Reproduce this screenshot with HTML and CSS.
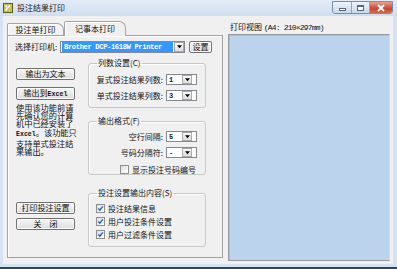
FILE: index.html
```html
<!DOCTYPE html>
<html lang="zh-CN">
<head>
    <meta charset="UTF-8">
    <title>投注结果打印</title>
    <link rel="stylesheet" href="styles.css">
</head>
<body>
    <div class="window">
        <div class="titlebar">
            <svg class="app-icon" viewBox="0 0 10 10">
                <rect x="0.5" y="0.5" width="9" height="9" fill="#c9c35c" stroke="#5d5a22"/>
                <path d="M2.5 7.5 L7 2.5 M2.5 2.5 L4 4" stroke="#fff" stroke-width="1.2"/>
            </svg>
            <span class="title">投注结果打印</span>
            <div class="caption-buttons">
                <span class="cap-btn min"><i></i></span>
                <span class="cap-btn max"><i></i></span>
                <span class="cap-btn close">
                    <svg viewBox="0 0 10 8"><path d="M2 1 L8 7 M8 1 L2 7" stroke="#fff" stroke-width="1.8"/></svg>
                </span>
            </div>
        </div>

        <div class="client">
            <div class="tab-area">
                <div class="tabs">
                    <div class="tab">投注单打印</div>
                    <div class="tab active">记事本打印</div>
                </div>
                <div class="tab-panel">
                    <div class="printer-row">
                        <label class="printer-label">选择打印机:</label>
                        <div class="combo wide">
                            <span class="combo-text selected">Brother DCP-1618W Printer</span>
                            <span class="drop"><svg viewBox="0 0 6 4"><path d="M0 0 H6 L3 3.5 Z"/></svg></span>
                        </div>
                        <button class="btn setup">设置</button>
                    </div>

                    <div class="panel-body">
                        <div class="left-col">
                            <button class="btn">输出为文本</button>
                            <button class="btn second">输出到<span class="mono">Excel</span></button>
                            <p class="hint">使用该功能前请先确认您的计算机中已经安装了<span class="mono">Excel</span>。该功能只支持单式投注结果输出。</p>
                            <button class="btn print">打印投注设置</button>
                            <button class="btn second">关&ensp;&ensp;闭</button>
                        </div>

                        <div class="right-col">
                            <fieldset class="group cols">
                                <legend>列数设置(C)</legend>
                                <div class="field">
                                    <span>复式投注结果列数:</span>
                                    <div class="combo small"><span class="combo-text">1</span><span class="drop"><svg viewBox="0 0 6 4"><path d="M0 0 H6 L3 3.5 Z"/></svg></span></div>
                                </div>
                                <div class="field">
                                    <span>单式投注结果列数:</span>
                                    <div class="combo small"><span class="combo-text">3</span><span class="drop"><svg viewBox="0 0 6 4"><path d="M0 0 H6 L3 3.5 Z"/></svg></span></div>
                                </div>
                            </fieldset>

                            <fieldset class="group format">
                                <legend>输出格式(F)</legend>
                                <div class="field">
                                    <span>空行间隔:</span>
                                    <div class="combo small"><span class="combo-text">5</span><span class="drop"><svg viewBox="0 0 6 4"><path d="M0 0 H6 L3 3.5 Z"/></svg></span></div>
                                </div>
                                <div class="field">
                                    <span>号码分隔符:</span>
                                    <div class="combo small"><span class="combo-text">-</span><span class="drop"><svg viewBox="0 0 6 4"><path d="M0 0 H6 L3 3.5 Z"/></svg></span></div>
                                </div>
                                <div class="check-row indent">
                                    <span class="check"></span>显示投注号码编号
                                </div>
                            </fieldset>

                            <fieldset class="group content">
                                <legend>投注设置输出内容(S)</legend>
                                <div class="check-row">
                                    <span class="check on"><svg viewBox="0 0 8 8"><path d="M1.5 4 L3.3 6 L6.8 1.5" fill="none" stroke="#1f5fb0" stroke-width="1.5"/></svg></span>投注结果信息
                                </div>
                                <div class="check-row">
                                    <span class="check on"><svg viewBox="0 0 8 8"><path d="M1.5 4 L3.3 6 L6.8 1.5" fill="none" stroke="#1f5fb0" stroke-width="1.5"/></svg></span>用户投注条件设置
                                </div>
                                <div class="check-row">
                                    <span class="check on"><svg viewBox="0 0 8 8"><path d="M1.5 4 L3.3 6 L6.8 1.5" fill="none" stroke="#1f5fb0" stroke-width="1.5"/></svg></span>用户过滤条件设置
                                </div>
                            </fieldset>
                        </div>
                    </div>
                </div>
            </div>

            <div class="preview">
                <div class="preview-label">打印视图 <span class="size-note">(A4: 210×297mm)</span></div>
                <div class="preview-page"></div>
            </div>
        </div>
    </div>
</body>
</html>
```

FILE: styles.css
```css
* {
    box-sizing: border-box;
}
body {
    margin: 0;
    font-family: "Noto Sans CJK SC", "Noto Sans", sans-serif;
    font-size: 8px;
    color: #111;
}
.mono {
    font-family: "Liberation Mono", monospace;
    font-size: 6.6px;
    font-weight: bold;
}
.window {
    width: 397px;
    height: 269px;
    background-color: #d5e3f3;
    border-bottom: 2px solid #1f4a57;
    overflow: hidden;
}
.titlebar {
    height: 16px;
    display: flex;
    align-items: center;
    padding-left: 3px;
    background: linear-gradient(#e3ecf7, #cfdeef);
}
.app-icon {
    width: 10px;
    height: 10px;
}
.title {
    margin-left: 4px;
    line-height: 10px;
    color: #222;
}
.caption-buttons {
    align-self: flex-start;
    display: flex;
    margin: 1px 4px 0 auto;
    height: 13px;
    border: 1px solid #7a8fab;
    border-radius: 0 0 3px 3px;
    overflow: hidden;
}
.cap-btn {
    display: flex;
    align-items: center;
    justify-content: center;
    background: linear-gradient(#eef3fa, #c9d8ec);
}
.cap-btn.min {
    width: 19px;
    border-right: 1px solid #93a6c1;
}
.cap-btn.min i {
    width: 7px;
    height: 3px;
    margin-top: 4px;
    background: #fff;
    border: 1px solid #55657d;
}
.cap-btn.max {
    width: 18px;
    border-right: 1px solid #93a6c1;
}
.cap-btn.max i {
    width: 7px;
    height: 6px;
    border: 1px solid #55657d;
    border-top-width: 2px;
    background: #fff;
}
.cap-btn.close {
    width: 22px;
    background: linear-gradient(#e4a193, #c6482f 60%, #d8674c);
}
.cap-btn.close svg {
    width: 10px;
    height: 8px;
}
.client {
    display: flex;
    margin: 0 4px 0 3px;
    height: 248px;
    background-color: #f0f0f0;
}
.tab-area {
    margin-left: 4px;
    width: 216px;
}
.tabs {
    display: flex;
    align-items: flex-end;
    height: 19px;
    padding-top: 5px;
}
.tab {
    width: 57px;
    height: 12px;
    line-height: 11px;
    text-align: center;
    border: 1px solid #a3a3a3;
    border-bottom: none;
    border-radius: 2px 7px 0 0;
    background-color: #f3f3f3;
    box-shadow: inset 1px 1px 0 #fff;
}
.tab.active {
    width: 62px;
    height: 15px;
    line-height: 13px;
    margin-bottom: -1px;
    position: relative;
    background-color: #f0f0f0;
}
.tab-panel {
    height: 223px;
    border: 1px solid #a3a3a3;
    box-shadow: inset 1px 1px 0 #fff;
    padding: 5px 0 0 7px;
}
.printer-row {
    display: flex;
    align-items: center;
    height: 12px;
}
.printer-label {
    width: 45px;
    line-height: 12px;
}
.combo {
    display: flex;
    align-items: center;
    background-color: #fff;
    border: 1px solid #828790;
}
.combo.wide {
    width: 125px;
    height: 12px;
    padding-left: 1px;
}
.combo-text {
    flex: 1;
    height: 100%;
    font-family: "Liberation Mono", monospace;
    font-size: 7px;
    font-weight: bold;
    line-height: 10px;
    padding-left: 2px;
}
.combo-text.selected {
    background-color: #3399ff;
    color: #fff;
    font-size: 7.2px;
    letter-spacing: -0.4px;
    margin-right: 1px;
}
.drop {
    width: 10px;
    height: 10px;
    display: flex;
    align-items: center;
    justify-content: center;
    background: linear-gradient(#fafafa, #dedede);
    border: 1px solid #a8a8a8;
}
.drop svg {
    width: 5px;
    height: 4px;
}
.btn {
    display: block;
    height: 12px;
    padding: 0;
    font-family: inherit;
    font-size: 8px;
    line-height: 10px;
    color: #111;
    border: 1px solid #707070;
    border-radius: 2px;
    background: linear-gradient(#f6f6f6, #dddddd);
    box-shadow: inset 0 0 0 1px #fcfcfc;
}
.btn.setup {
    width: 23px;
    margin-left: 4px;
}
.panel-body {
    display: flex;
    padding-left: 1px;
}
.left-col {
    width: 59px;
    padding-top: 15px;
}
.left-col .btn {
    width: 59px;
}
.left-col .btn.second {
    margin-top: 7px;
    height: 13px;
}
.hint {
    margin: 3px -4px 0 0;
    font-size: 8.2px;
    line-height: 8.2px;
}
.hint .mono {
    white-space: nowrap;
}
.btn.print {
    margin-top: 47px;
}
.left-col .btn.print + .btn.second {
    margin-top: 4px;
    height: 12px;
}
.right-col {
    width: 118px;
    margin-left: 13px;
    padding-top: 4px;
}
.group {
    margin: 0;
    padding: 0 8px 0 7px;
    min-width: 0;
    border: 1px solid #c8c8c8;
    border-radius: 3px;
    box-shadow: inset 1px 1px 0 #fff;
}
.group legend {
    margin-left: 1px;
    padding: 0 1px;
    line-height: 12px;
}
.group.cols {
    padding-bottom: 6px;
}
.group.format {
    margin-top: 7px;
}
.group.content {
    margin-top: 12px;
    padding-bottom: 6px;
}
.field {
    display: flex;
    justify-content: flex-end;
    align-items: center;
    height: 11px;
    margin-top: 5px;
}
.group .field:first-of-type {
    margin-top: 5px;
}
.group.format .field:first-of-type {
    margin-top: 4px;
}
.field span {
    margin-right: 3px;
}
.combo.small {
    width: 31px;
    height: 11px;
    padding-right: 1px;
}
.combo.small .drop {
    height: 9px;
}
.check-row {
    display: flex;
    align-items: center;
    height: 12px;
    margin-top: 1px;
}
.check-row.indent {
    padding-left: 24px;
    margin-top: 6px;
    height: 10px;
}
.group.content .check-row:first-of-type {
    margin-top: 3px;
}
.check {
    width: 9px;
    height: 9px;
    margin-right: 3px;
    border: 1px solid #8e8f8f;
    background: linear-gradient(135deg, #dcdcdc, #fff);
    display: flex;
    align-items: center;
    justify-content: center;
}
.check svg {
    width: 7px;
    height: 7px;
}
.preview {
    margin-left: 5px;
    width: 162px;
    padding-top: 6px;
}
.preview-label {
    padding-left: 2px;
    line-height: 10px;
}
.size-note {
    font-family: "Liberation Mono", monospace;
    font-size: 8px;
    letter-spacing: -0.8px;
}
.preview-page {
    margin-top: 1px;
    height: 227px;
    background-color: #bcd3ee;
    border: 1px solid #9a9a9a;
    border-right-color: #d8d8d8;
    box-shadow: inset 1px 1px 0 #b0bccb;
}
```
